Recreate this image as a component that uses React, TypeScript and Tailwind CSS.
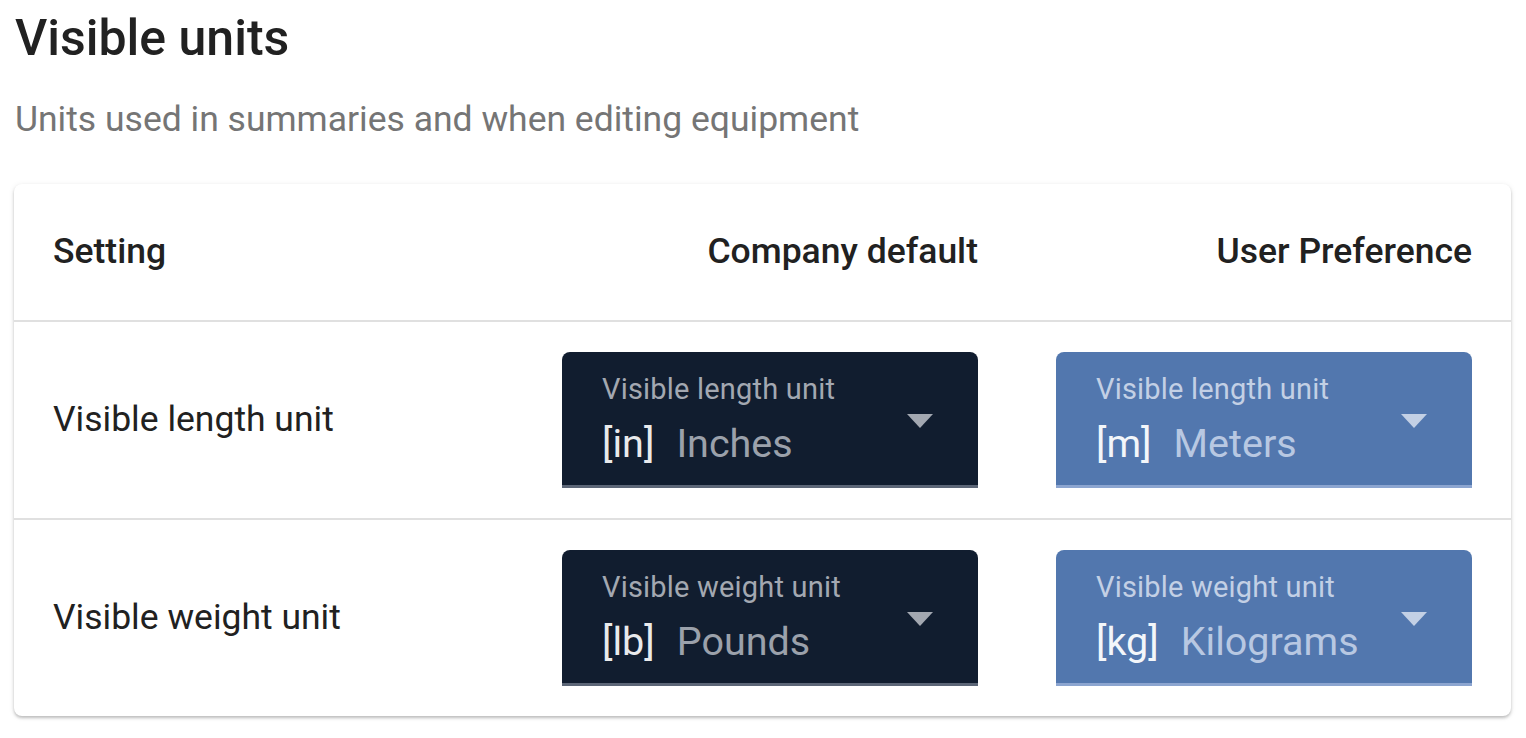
import React from 'react';

type Unit = { code: string; name: string };

const rows: { label: string; field: string; company: Unit; user: Unit }[] = [
  { label: 'Visible length unit', field: 'Visible length unit', company: { code: '[in]', name: 'Inches' }, user: { code: '[m]', name: 'Meters' } },
  { label: 'Visible weight unit', field: 'Visible weight unit', company: { code: '[lb]', name: 'Pounds' }, user: { code: '[kg]', name: 'Kilograms' } },
];

function UnitSelect({ field, unit, variant }: { field: string; unit: Unit; variant: 'dark' | 'blue' }) {
  const dark = variant === 'dark';
  return (
    <div
      className={
        dark
          ? 'relative w-[416px] h-[136px] rounded-t-[8px] bg-[#111d2f] border-b-[3px] border-[#5c6677] pl-[40px] pt-[19px]'
          : 'relative w-[416px] h-[136px] rounded-t-[8px] bg-[#5277ae] border-b-[3px] border-[#8ca5d0] pl-[40px] pt-[19px]'
      }
    >
      <div className={dark ? 'text-[29px] leading-[36px] tracking-[0.2px] text-[#a3a8b1]' : 'text-[29px] leading-[36px] tracking-[0.2px] text-[#c3d0e5]'}>{field}</div>
      <div className="mt-[13px] text-[39.5px] leading-[48px] flex">
        <span className={dark ? 'text-[#e9eaec]' : 'text-[#f3f6fa]'}>{unit.code}</span>
        <span className={dark ? 'ml-[22px] text-[#9ba1ab]' : 'ml-[22px] text-[#b8c8e2]'}>{unit.name}</span>
      </div>
      <svg className="absolute right-[45px] top-[62px]" width="26" height="14" viewBox="0 0 26 14">
        <path d="M0 0 L26 0 L13 14 Z" fill={dark ? '#a3a8b1' : '#c3d0e5'} />
      </svg>
    </div>
  );
}

export default function App() {
  return (
    <main className="bg-white min-h-screen pl-[14px] pr-[15px] pt-[6px]" style={{ fontFamily: 'Roboto, "Noto Sans", sans-serif' }}>
      <h1 className="text-[50px] leading-[64px] font-medium text-[#212121] pl-[1px]">Visible units</h1>
      <p className="mt-[27px] text-[35.5px] leading-[44px] text-[#757575] pl-[1px]">Units used in summaries and when editing equipment</p>

      <div className="mt-[43px] rounded-[8px] bg-white shadow-[0_2px_3px_rgba(0,0,0,0.22),0_1px_6px_rgba(0,0,0,0.08)] overflow-hidden">
        <div className="grid grid-cols-[1fr_auto_auto]">
          <div className="h-[136px] flex items-center pl-[39px] text-[35.5px] font-medium text-[#212121]">Setting</div>
          <div className="h-[136px] flex items-center justify-end px-[39px] text-[35.5px] font-medium text-[#212121]">Company default</div>
          <div className="h-[136px] flex items-center justify-end px-[39px] text-[35.5px] font-medium text-[#212121]">User Preference</div>

          {rows.map((r) => (
            <React.Fragment key={r.label}>
              <div className="col-span-3 h-[2px] bg-[#e0e0e0]" />
              <div className="h-[196px] flex items-center pl-[39px] text-[35.5px] text-[#212121]">{r.label}</div>
              <div className="h-[196px] flex items-center justify-end px-[39px]">
                <UnitSelect field={r.field} unit={r.company} variant="dark" />
              </div>
              <div className="h-[196px] flex items-center justify-end px-[39px]">
                <UnitSelect field={r.field} unit={r.user} variant="blue" />
              </div>
            </React.Fragment>
          ))}
        </div>
      </div>
    </main>
  );
}
